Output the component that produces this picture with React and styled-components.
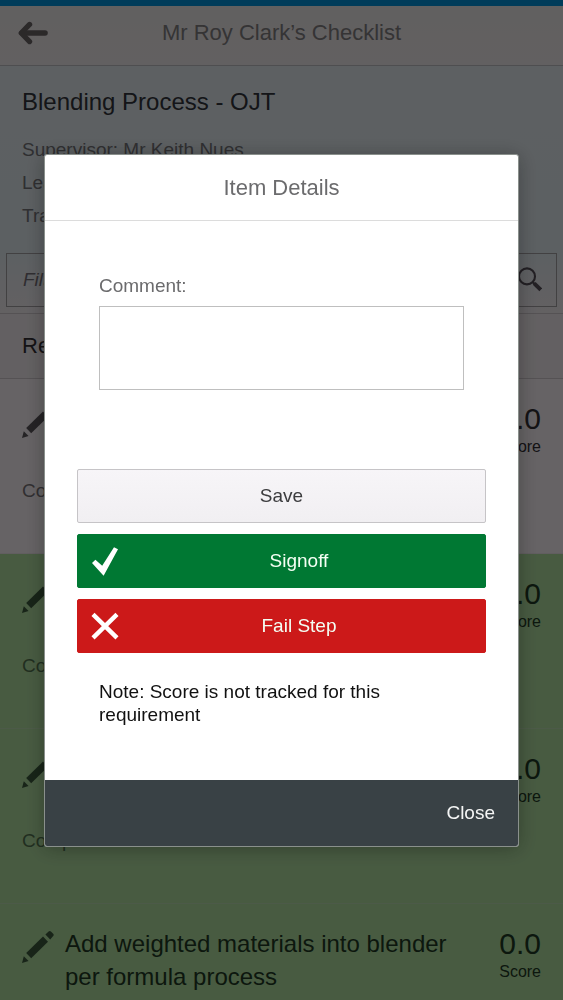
import React from 'react'
import styled, { createGlobalStyle } from 'styled-components'

const GlobalStyle = createGlobalStyle`
  * {
    box-sizing: border-box;
  }

  body {
    margin: 0;
    font-family: "Liberation Sans", Arial, sans-serif;
    font-size: 19px;
    color: #333;
  }

  button, input, textarea {
    font-family: inherit;
    font-size: inherit;
  }

  h1, h2, h3, p {
    margin: 0;
    font-weight: 400;
  }
`;

const requirements = [
  { id: 1, status: 'Comp' },
  { id: 2, status: 'Comp', done: true },
  { id: 3, status: 'Comp', done: true },
  { id: 4, title: 'Add weighted materials into blender per formula process', done: true },
]

const PencilIcon = () => (
  <Pencil viewBox="0 0 33 33" aria-hidden="true">
    <path d="M0 33 L1.8 26.2 L6.6 30.9 Z" />
    <path d="M4.2 22.9 L21 6.6 L26 11.7 L9.2 28.2 Z" />
    <path d="M23.4 4.6 L26.6 1.4 Q27.8 .4 28.9 1.5 L31.2 3.8 Q32.2 5 31.2 6.1 L28.2 9.4 Z" />
  </Pencil>
)

const BackIcon = () => (
  <svg width="30" height="24" viewBox="0 0 30 24" fill="none" stroke="currentColor" aria-hidden="true">
    <path d="M4 12 H27" strokeWidth="5.6" strokeLinecap="round" />
    <path d="M11.6 3.4 L3.2 12 L11.6 20.6" strokeWidth="5.2" strokeLinecap="round" strokeLinejoin="round" />
  </svg>
)

const SearchIcon = () => (
  <svg width="26" height="26" viewBox="0 0 26 26" fill="none" stroke="currentColor" aria-hidden="true">
    <circle cx="11" cy="9.4" r="8" strokeWidth="2.1" />
    <path d="M16.6 15 L19 17.4" strokeWidth="2.2" />
    <path d="M18.2 16.4 L24.8 22.8" strokeWidth="4" />
  </svg>
)

const CheckIcon = () => (
  <svg width="28" height="30" viewBox="0 0 28 30" fill="currentColor" aria-hidden="true">
    <path d="M1 16.9 L4.4 13.8 L11.2 19.8 L23 1.2 L27 3.2 L12.6 29.8 Z" />
  </svg>
)

const CrossIcon = () => (
  <svg width="28" height="28" viewBox="0 0 28 28" fill="none" stroke="currentColor" aria-hidden="true">
    <path d="M2 2.4 L26 25.8 M26 2.4 L2 25.8" strokeWidth="4.4" />
  </svg>
)

const Requirement = ({ item }) => (
  <Row $done={item.done}>
    <PencilIcon />
    <RowTitle>{item.title}</RowTitle>
    <Score>
      <ScoreValue>0.0</ScoreValue>
      <ScoreLabel>Score</ScoreLabel>
    </Score>
    <Status>{item.status}</Status>
  </Row>
)

const App = () => (
  <>
    <GlobalStyle />
    <Page>
      <Header>
        <BackButton aria-label="Back"><BackIcon /></BackButton>
        <HeaderTitle>Mr Roy Clark’s Checklist</HeaderTitle>
      </Header>

      <Info>
        <InfoTitle>Blending Process - OJT</InfoTitle>
        <InfoLine>Supervisor: Mr Keith Nues</InfoLine>
        <InfoLine>Learner</InfoLine>
        <InfoLine>Trainer</InfoLine>
      </Info>

      <FilterBar>
        <FilterBox>
          <FilterInput type="text" placeholder="Filter" aria-label="Filter" />
          <SearchButton aria-label="Search"><SearchIcon /></SearchButton>
        </FilterBox>
      </FilterBar>

      <ListHeading>Requirements</ListHeading>
      <List>
        {requirements.map(item => <Requirement key={item.id} item={item} />)}
      </List>
    </Page>

    <Overlay>
      <Dialog role="dialog" aria-modal="true" aria-labelledby="dialog-title">
        <DialogHeader id="dialog-title">Item Details</DialogHeader>
        <DialogBody>
          <Field>
            <Label htmlFor="comment">Comment:</Label>
            <Comment id="comment" />
          </Field>
          <Actions>
            <Button>Save</Button>
            <Button $color="#007833">
              <ButtonIcon><CheckIcon /></ButtonIcon>
              Signoff
            </Button>
            <Button $color="#cc1919">
              <ButtonIcon><CrossIcon /></ButtonIcon>
              Fail Step
            </Button>
          </Actions>
          <Note>Note: Score is not tracked for this requirement</Note>
        </DialogBody>
        <DialogFooter>
          <CloseButton>Close</CloseButton>
        </DialogFooter>
      </Dialog>
    </Overlay>
  </>
)

export default App;

// Checklist page
const Page = styled.main`
  height: 100vh;
  overflow: hidden;
  border-top: 6px solid #0096e0;
  background: #fff8fc;
`;

const Header = styled.header`
  display: grid;
  grid-template-columns: 50px 1fr 50px;
  align-items: center;
  height: 60px;
  padding: 0 8px 6px;
  background: linear-gradient(#f2f0f0, #f6eff2);
  border-bottom: 1px solid #c4c4c8;
`;

const BackButton = styled.button`
  display: flex;
  padding: 0 10px;
  border: none;
  background: none;
  color: #6c6668;
`;

const HeaderTitle = styled.h1`
  font-size: 22px;
  text-align: center;
  color: #858385;
`;

const Info = styled.section`
  padding: 20px 22px;
  background: linear-gradient(#e9f1f5, #e6eff5);
`;

const InfoTitle = styled.h2`
  margin-bottom: 15px;
  font-size: 24px;
  line-height: 32px;
  color: #33353c;
`;

const InfoLine = styled.p`
  font-size: 19px;
  line-height: 33px;
  color: #77777c;
`;

const FilterBar = styled.div`
  padding: 1px 6px 6px;
  background: linear-gradient(#e6eff5, #f8f2f6);
  border-bottom: 1px solid #d4cdd2;
`;

const FilterBox = styled.div`
  display: flex;
  align-items: center;
  height: 54px;
  padding: 0 14px 0 16px;
  border: 1px solid #a6a2a6;
`;

const FilterInput = styled.input`
  flex: 1;
  min-width: 0;
  padding: 0;
  border: none;
  outline: none;
  background: none;
  font-style: italic;

  &::placeholder {
    color: #77727a;
    opacity: 1;
  }
`;

const SearchButton = styled.button`
  display: flex;
  padding: 0;
  border: none;
  background: none;
  color: #57505a;
`;

const ListHeading = styled.h2`
  padding: 0 22px;
  border-bottom: 1px solid #d4cdd2;
  background: #f8f1f5;
  font-size: 22px;
  line-height: 64px;
  color: #333036;
`;

const List = styled.ul`
  margin: 0;
  padding: 0;
  list-style: none;
`;

const Row = styled.li`
  display: grid;
  grid-template-columns: 33px 1fr 52px;
  grid-template-rows: 66px auto;
  column-gap: 10px;
  align-items: start;
  height: 175px;
  padding: 23px 22px 0;
  border-bottom: 1px solid ${props => props.$done ? '#bfe2b4' : '#f2eaef'};
  background: ${props => props.$done ? '#b4e3a4' : '#fff8fd'};
  color: ${props => props.$done ? '#1f3a24' : '#343036'};
`;

const Pencil = styled.svg`
  width: 33px;
  height: 33px;
  margin-top: 3px;
  fill: currentColor;
  opacity: 0.8;
`;

const RowTitle = styled.h3`
  font-size: 24px;
  line-height: 33px;
`;

const Score = styled.div`
  display: flex;
  flex-direction: column;
  align-items: flex-end;
`;

const ScoreValue = styled.span`
  font-size: 30px;
  line-height: 34px;
`;

const ScoreLabel = styled.span`
  font-size: 16px;
  line-height: 22px;
`;

const Status = styled.p`
  grid-column: 1 / -1;
  padding-top: 12px;
  line-height: 22px;
  opacity: 0.65;
`;

// Item details dialog
const Overlay = styled.div`
  position: fixed;
  inset: 0;
  display: flex;
  align-items: center;
  padding: 0 44px;
  background: rgba(0, 0, 0, 0.6);
`;

const Dialog = styled.section`
  flex: 1;
  border: 1px solid #8a908c;
  border-radius: 3px;
  overflow: hidden;
  background: #fff;
  box-shadow: 0 2px 20px rgba(0, 0, 0, 0.3);
`;

const DialogHeader = styled.h2`
  border-bottom: 1px solid #dcdcdc;
  font-size: 22px;
  line-height: 65px;
  text-align: center;
  color: #6b6b6d;
`;

const DialogBody = styled.div`
  padding: 53px 32px 54px;
`;

const Field = styled.div`
  display: flex;
  flex-direction: column;
  gap: 8px;
  padding: 0 22px;
`;

const Label = styled.label`
  line-height: 24px;
  color: #6b6b6d;
`;

const Comment = styled.textarea`
  display: block;
  width: 100%;
  height: 84px;
  padding: 8px;
  border: 1px solid #bfbfbf;
  background: #fff;
  resize: none;
`;

const Actions = styled.div`
  display: flex;
  flex-direction: column;
  gap: 11px;
  margin-top: 79px;
`;

const Button = styled.button`
  display: grid;
  grid-template-columns: 54px 1fr;
  place-items: center;
  width: 100%;
  height: 54px;
  padding: 0 19px 0 0;
  border: 1px solid ${props => props.$color || '#c6c4c7'};
  border-radius: 2px;
  background: ${props => props.$color || 'linear-gradient(#f7f5f8, #f1eff2)'};
  color: ${props => props.$color ? '#f4fff4' : '#3c3c3e'};

  ${props => !props.$color && `
    display: block;
    padding: 0;
  `}
`;

const ButtonIcon = styled.span`
  display: flex;
  color: #fff;
`;

const Note = styled.p`
  padding: 27px 22px 0;
  line-height: 23px;
  color: #111;
`;

const DialogFooter = styled.footer`
  display: flex;
  justify-content: flex-end;
  align-items: center;
  height: 66px;
  padding: 0 23px;
  background: #394145;
`;

const CloseButton = styled.button`
  padding: 0;
  border: none;
  background: none;
  color: #f4f5f5;
`;
